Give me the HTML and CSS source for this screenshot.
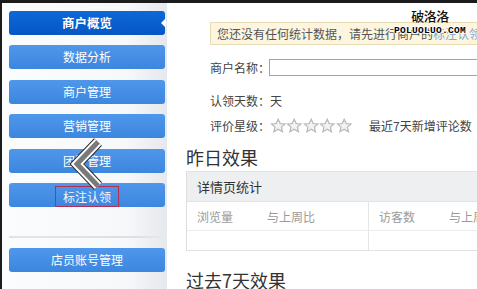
FILE: index.html
```html
<!DOCTYPE html>
<html lang="zh">
<head>
<meta charset="utf-8">
<link rel="stylesheet" href="styles.css">
</head>
<body>
<div class="page">
  <aside class="sidebar">
    <nav class="menu">
      <a class="btn active">商户概览<span class="notch"></span></a>
      <a class="btn">数据分析</a>
      <a class="btn">商户管理</a>
      <a class="btn">营销管理</a>
      <a class="btn">团队管理</a>
      <a class="btn"><span class="marked">标注认领</span></a>
    </nav>
    <div class="sep"></div>
    <nav class="menu">
      <a class="btn">店员账号管理</a>
    </nav>
  </aside>
  <main class="main">
    <div class="form">
      <div class="notice">您还没有任何统计数据，请先进行商户的<span class="link">标注认领</span></div>
      <div class="row r1"><span class="label">商户名称：</span><span class="input"></span></div>
      <div class="row r2"><span class="label">认领天数：天</span></div>
      <div class="row r3"><span class="label">评价星级：</span>
        <span class="stars">
          <svg viewBox="0 0 16 15" class="star"><path d="M8 1.2 L10 5.6 L14.8 6 L11.2 9.1 L12.3 13.8 L8 11.3 L3.7 13.8 L4.8 9.1 L1.2 6 L6 5.6 Z"/></svg>
          <svg viewBox="0 0 16 15" class="star"><path d="M8 1.2 L10 5.6 L14.8 6 L11.2 9.1 L12.3 13.8 L8 11.3 L3.7 13.8 L4.8 9.1 L1.2 6 L6 5.6 Z"/></svg>
          <svg viewBox="0 0 16 15" class="star"><path d="M8 1.2 L10 5.6 L14.8 6 L11.2 9.1 L12.3 13.8 L8 11.3 L3.7 13.8 L4.8 9.1 L1.2 6 L6 5.6 Z"/></svg>
          <svg viewBox="0 0 16 15" class="star"><path d="M8 1.2 L10 5.6 L14.8 6 L11.2 9.1 L12.3 13.8 L8 11.3 L3.7 13.8 L4.8 9.1 L1.2 6 L6 5.6 Z"/></svg>
          <svg viewBox="0 0 16 15" class="star"><path d="M8 1.2 L10 5.6 L14.8 6 L11.2 9.1 L12.3 13.8 L8 11.3 L3.7 13.8 L4.8 9.1 L1.2 6 L6 5.6 Z"/></svg>
        </span>
        <span class="recent">最近7天新增评论数</span>
      </div>
    </div>
    <h2 class="title">昨日效果</h2>
    <div class="table">
      <div class="thead">详情页统计</div>
      <div class="cols">
        <div class="col"><span class="c1">浏览量</span><span>与上周比</span></div>
        <div class="col"><span class="c1">访客数</span><span>与上周比</span></div>
      </div>
      <div class="cols empty">
        <div class="col"></div>
        <div class="col"></div>
      </div>
    </div>
    <h2 class="title t2">过去7天效果</h2>
    <div class="watermark">
      <div class="wm1">破洛洛</div>
      <div class="wm2">POLUOLUO.COM</div>
    </div>
  </main>
  <svg class="chevron" viewBox="0 0 40 54" width="40" height="54">
    <polyline points="30,5 9,27 30,49" fill="none" stroke="#2a2a2a" stroke-width="11" stroke-linejoin="miter" stroke-miterlimit="10"/>
    <polyline points="30,5 9,27 30,49" fill="none" stroke="#ffffff" stroke-width="9" stroke-linejoin="miter" stroke-miterlimit="10"/>
    <polyline points="30,5 9,27 30,49" fill="none" stroke="#7a7a7a" stroke-width="5" stroke-linejoin="miter" stroke-miterlimit="10"/>
  </svg>
</div>
</body>
</html>
```

FILE: styles.css
```css
* { box-sizing: border-box; }
html, body { margin: 0; padding: 0; }
body {
  width: 477px;
  height: 289px;
  overflow: hidden;
  background: #fff;
  border-top: 3px solid #1b1b1b;
  border-left: 2px solid #1b1b1b;
  font-family: "Noto Sans CJK SC", "Liberation Sans", sans-serif;
  font-size: 12px;
  color: #444;
}
.page {
  position: relative;
  display: flex;
  width: 700px;
  height: 286px;
}
.sidebar {
  width: 165px;
  flex: none;
  padding: 8px 0 0 7px;
  background: linear-gradient(to right, #fbfcfd 0%, #f7f8fa 75%, #e5e8ed 100%);
}
.menu {
  display: flex;
  flex-direction: column;
}
.btn {
  position: relative;
  display: flex;
  align-items: center;
  justify-content: center;
  width: 156px;
  height: 24px;
  margin-bottom: 10.4px;
  border-radius: 3px;
  background: linear-gradient(#4f97ea, #3c86df);
  color: #fff;
  font-size: 12px;
  line-height: 24px;
}
.menu .btn:last-child { margin-bottom: 0; }
.btn.active {
  background: linear-gradient(#0e68d8, #0656c4);
  font-weight: bold;
  font-size: 12.5px;
}
.notch {
  position: absolute;
  right: -1px;
  top: 7px;
  width: 0;
  height: 0;
  border-top: 5px solid transparent;
  border-bottom: 5px solid transparent;
  border-right: 5px solid #fff;
}
.marked {
  display: inline-block;
  margin-top: 4px;
  padding: 0 7px;
  height: 21px;
  line-height: 19px;
  border: 1px solid #b53050;
  color: #f2f6fd;
}
.sep {
  height: 2px;
  width: 158px;
  margin: 29px 0 10px 0;
  background: linear-gradient(to right, #e2e4e8, #dcdfe3 80%, #e8eaee);
}
.main {
  position: relative;
  flex: 1;
  padding-left: 19px;
}
.form {
  padding-left: 24px;
  padding-top: 19px;
}
.notice {
  width: 300px;
  height: 23px;
  line-height: 21px;
  padding-left: 6px;
  background: #fcf6e1;
  border: 1px solid #eadcb2;
  color: #555;
  white-space: nowrap;
}
.link { color: #8aa6d6; }
.row {
  display: flex;
  align-items: center;
  height: 17px;
  color: #444;
  white-space: nowrap;
}
.r1 { margin-top: 14px; }
.r2 { margin-top: 16px; }
.r3 { margin-top: 8px; }
.input {
  display: block;
  width: 240px;
  height: 17px;
  margin-left: -1px;
  border: 1px solid #93a8bf;
  background: #fff;
}
.stars {
  display: flex;
  margin-left: 0;
}
.star {
  width: 16.4px;
  height: 15px;
  fill: #f3f3f3;
  stroke: #b9b9b9;
  stroke-width: 1.2;
}
.recent { margin-left: 17px; }
.title {
  margin: 11px 0 0 0;
  font-size: 18px;
  line-height: 24px;
  font-weight: normal;
  color: #333;
}
.table {
  margin-top: 2px;
  width: 420px;
  border-left: 1px solid #dedede;
  border-top: 1px solid #e2e2e2;
  border-bottom: 1px solid #e2e2e2;
}
.thead {
  height: 30px;
  line-height: 30px;
  padding-left: 10px;
  background: #eeeff1;
  font-size: 13px;
  color: #333;
  border-bottom: 1px solid #e2e2e2;
}
.cols {
  display: flex;
  height: 29px;
  border-bottom: 1px solid #ececec;
}
.cols.empty { height: 19px; border-bottom: none; }
.col {
  width: 182px;
  display: flex;
  align-items: center;
  padding-left: 10px;
  color: #9a9a9a;
  border-right: 1px solid #e6e6e6;
}
.c1 { width: 70px; }
.t2 { margin-top: 17px; }
.watermark {
  position: absolute;
  left: 227px;
  top: 6px;
  text-align: center;
  line-height: 1;
}
.wm1 {
  font-size: 13px;
  color: #111;
  font-weight: 500;
  letter-spacing: -0.5px;
}
.wm2 {
  margin-top: 4px;
  font-family: "Liberation Mono", monospace;
  font-size: 9.5px;
  font-weight: bold;
  letter-spacing: 0.3px;
  color: #000;
  text-shadow: 1px 0 0 #fff, -1px 0 0 #fff, 0 1px 0 #fff, 0 -1px 0 #fff;
}
.chevron {
  position: absolute;
  left: 66px;
  top: 134px;
}
```
